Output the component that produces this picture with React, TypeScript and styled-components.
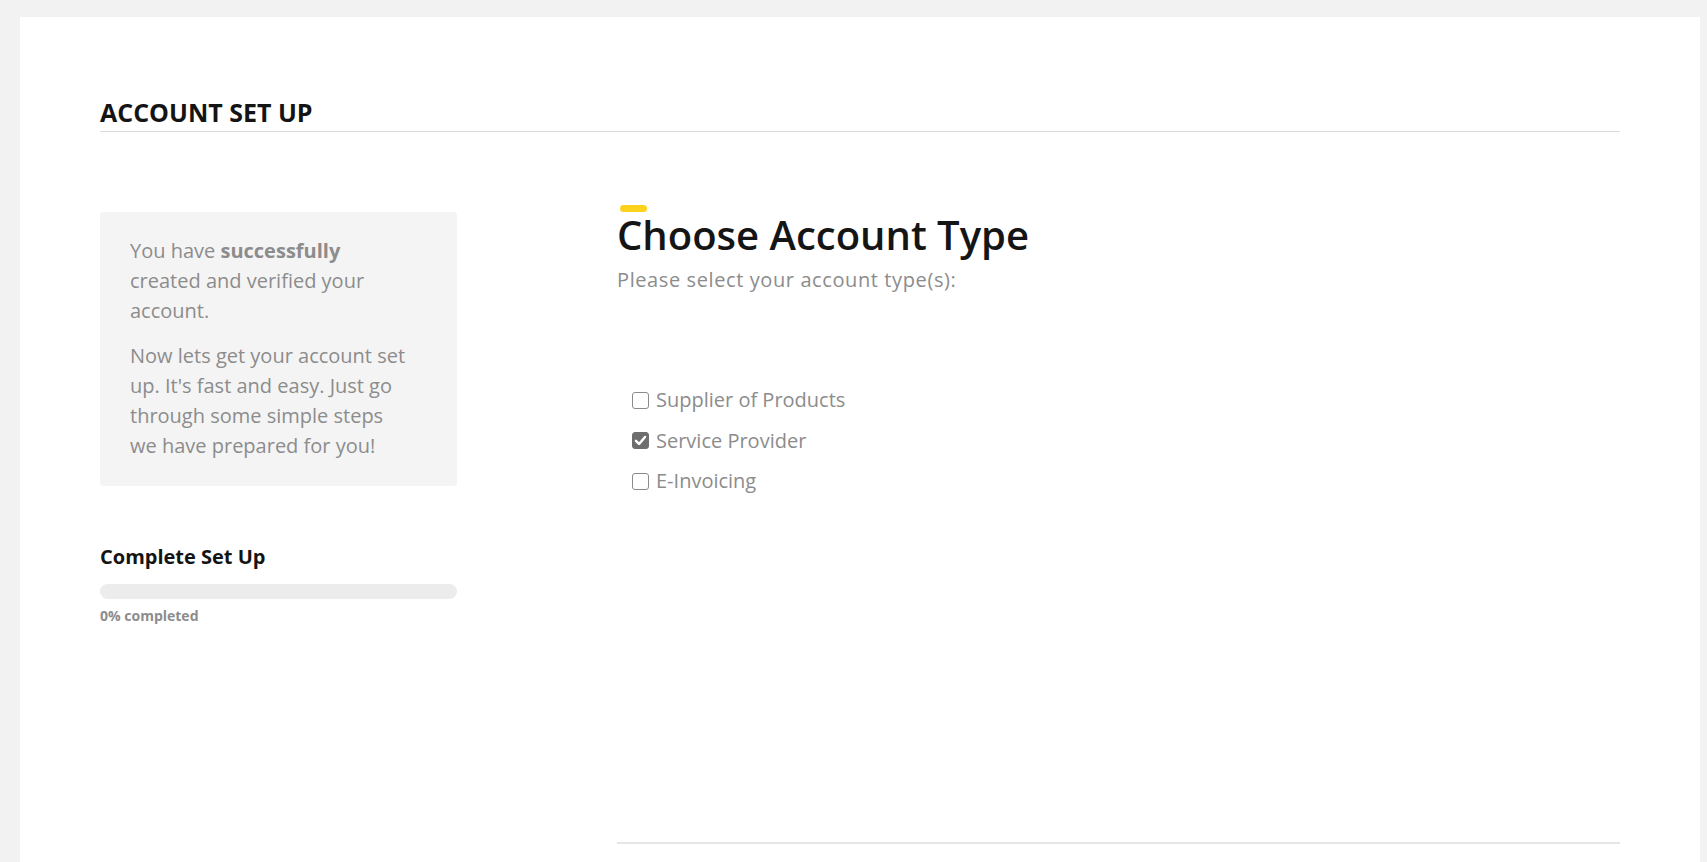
import React from "react";
import styled, { createGlobalStyle } from "styled-components";

const GlobalStyle = createGlobalStyle`
  html, body {
    margin: 0;
    padding: 0;
    background: #f2f2f2;
    font-family: "Open Sans", "Liberation Sans", sans-serif;
    overflow: hidden;
  }
  * { box-sizing: border-box; }
`;

const Card = styled.div`
  margin: 17px 7px 0 20px;
  min-height: 845px;
  background: #fff;
  padding: 80px 80px 0;
`;

const PageHeader = styled.h1`
  margin: 0;
  padding-bottom: 4px;
  border-bottom: 1px solid #dcdcdc;
  font-size: 25px;
  line-height: 30px;
  font-weight: 700;
  color: #141414;
`;

const Layout = styled.div`
  display: grid;
  grid-template-columns: 357px 1fr;
  column-gap: 160px;
  padding-top: 73px;
`;

const Sidebar = styled.aside`
  padding-top: 7px;
`;

const InfoBox = styled.div`
  background: #f4f4f4;
  border-radius: 4px;
  padding: 24px 48px 25px 30px;
  color: #8c8c8c;
  font-size: 20px;
  line-height: 30px;

  p {
    margin: 0;
  }
  p + p {
    margin-top: 15px;
  }
  b {
    font-weight: 700;
  }
`;

const ProgressTitle = styled.h3`
  margin: 58px 0 0;
  font-size: 20px;
  line-height: 26px;
  font-weight: 700;
  color: #141414;
`;

const ProgressTrack = styled.div`
  margin-top: 14px;
  height: 15px;
  border-radius: 8px;
  background: #ececec;
  overflow: hidden;
`;

const ProgressFill = styled.div`
  height: 100%;
  background: #ffd21f;
`;

const ProgressLabel = styled.div`
  margin-top: 7px;
  font-size: 14px;
  line-height: 20px;
  font-weight: 700;
  color: #8c8c8c;
`;

const Main = styled.section`
  display: flex;
  flex-direction: column;
`;

const Accent = styled.span`
  display: block;
  width: 27px;
  height: 7px;
  margin-left: 3px;
  border-radius: 4px;
  background: #fcd21d;
`;

const Title = styled.h2`
  margin: 0 0 4px;
  font-size: 40px;
  line-height: 46px;
  font-weight: 600;
  color: #151515;
`;

const Subtitle = styled.p`
  margin: 3px 0 0;
  font-size: 20px;
  line-height: 30px;
  color: #8c8c8c;
  letter-spacing: 0.6px;
`;

const OptionList = styled.div`
  display: flex;
  flex-direction: column;
  gap: 10.5px;
  margin-top: 90px;
  padding-left: 15px;
`;

const Option = styled.label`
  display: flex;
  align-items: center;
  gap: 7px;
  font-size: 20px;
  line-height: 30px;
  color: #8c8c8c;
  cursor: pointer;
`;

const Box = styled.span<{ $checked: boolean }>`
  display: inline-flex;
  align-items: center;
  justify-content: center;
  width: 17px;
  height: 17px;
  border-radius: 3px;
  border: 1.5px solid ${(p) => (p.$checked ? "#6e6e6e" : "#8a8a8a")};
  background: ${(p) => (p.$checked ? "#6e6e6e" : "#fff")};
`;

const HiddenInput = styled.input`
  display: none;
`;

const FooterRule = styled.hr`
  margin: 346px 0 0;
  border: 0;
  height: 2px;
  background: #e6e6e6;
`;

const options = ["Supplier of Products", "Service Provider", "E-Invoicing"];

export default function App() {
  const [selected, setSelected] = React.useState<string[]>(["Service Provider"]);
  const progress = 0;

  const toggle = (name: string) =>
    setSelected((s) => (s.includes(name) ? s.filter((x) => x !== name) : [...s, name]));

  return (
    <>
      <GlobalStyle />
      <Card>
        <PageHeader>ACCOUNT SET UP</PageHeader>
        <Layout>
          <Sidebar>
            <InfoBox>
              <p>
                You have <b>successfully</b> created and verified your account.
              </p>
              <p>Now lets get your account set up. It's fast and easy. Just go through some simple steps we have prepared for you!</p>
            </InfoBox>
            <ProgressTitle>Complete Set Up</ProgressTitle>
            <ProgressTrack>
              <ProgressFill style={{ width: `${progress}%` }} />
            </ProgressTrack>
            <ProgressLabel>{progress}% completed</ProgressLabel>
          </Sidebar>
          <Main>
            <Accent />
            <Title>Choose Account Type</Title>
            <Subtitle>Please select your account type(s):</Subtitle>
            <OptionList>
              {options.map((name) => {
                const checked = selected.includes(name);
                return (
                  <Option key={name}>
                    <HiddenInput type="checkbox" checked={checked} onChange={() => toggle(name)} />
                    <Box $checked={checked}>
                      {checked && (
                        <svg width="13" height="13" viewBox="0 0 12 12">
                          <path d="M1.8 6.3 L4.7 9.2 L10.2 2.8" fill="none" stroke="#fff" strokeWidth="2.3" strokeLinecap="round" strokeLinejoin="round" />
                        </svg>
                      )}
                    </Box>
                    {name}
                  </Option>
                );
              })}
            </OptionList>
            <FooterRule />
          </Main>
        </Layout>
      </Card>
    </>
  );
}
